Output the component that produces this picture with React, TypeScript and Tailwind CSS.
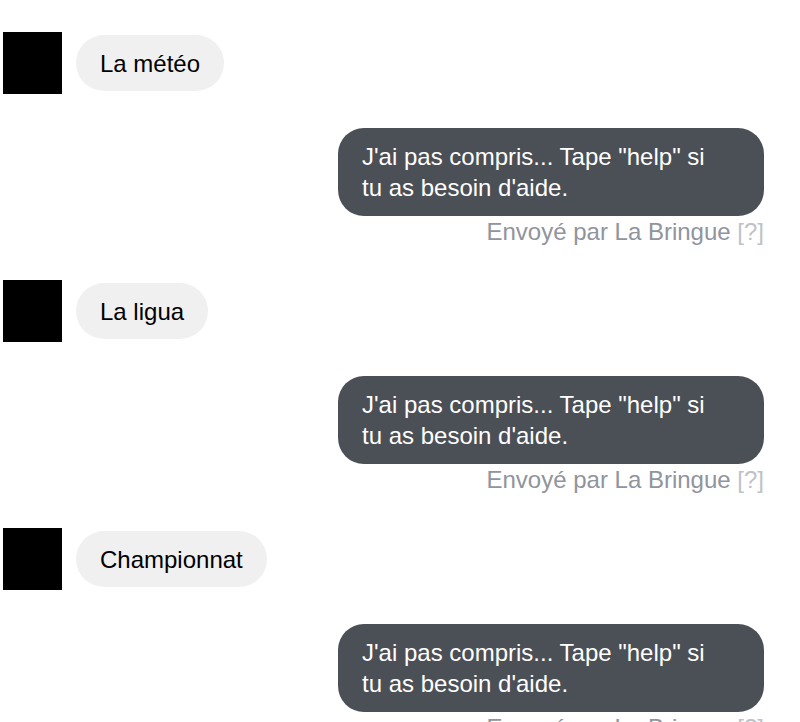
import React from "react";

interface MessageBlock {
    question: string;
}

const blocks: MessageBlock[] = [
    { question: "La météo" },
    { question: "La ligua" },
    { question: "Championnat" },
];

const ChatBlock: React.FC<MessageBlock> = ({ question }) => {
    return (
        <div className="flex flex-col">
            <div className="flex items-center gap-[14px] pl-[3px]">
                <div className="w-[59px] h-[62px] bg-black shrink-0" />
                <div className="h-[56px] px-6 flex items-center rounded-full bg-[#f0f0f0] text-black">
                    {question}
                </div>
            </div>
            <div className="mt-[34px] flex flex-col items-end pr-[36px]">
                <div className="w-[426px] rounded-[26px] bg-[#4b4f56] text-white pl-6 pr-[40px] py-[13px]">
                    J'ai pas compris... Tape "help" si tu as besoin d'aide.
                </div>
                <div className="text-[#90949c] mb-[33px]">
                    Envoyé par La Bringue <span className="text-[#bec2c9]">[?]</span>
                </div>
            </div>
        </div>
    );
};

export default function App() {
    return (
        <div
            className="min-h-screen bg-white pt-8 text-[24px] leading-[31px]"
            style={{ fontFamily: '"Liberation Sans", Arial, sans-serif' }}
        >
            {blocks.map((b, i) => (
                <ChatBlock key={i} question={b.question} />
            ))}
        </div>
    );
}
